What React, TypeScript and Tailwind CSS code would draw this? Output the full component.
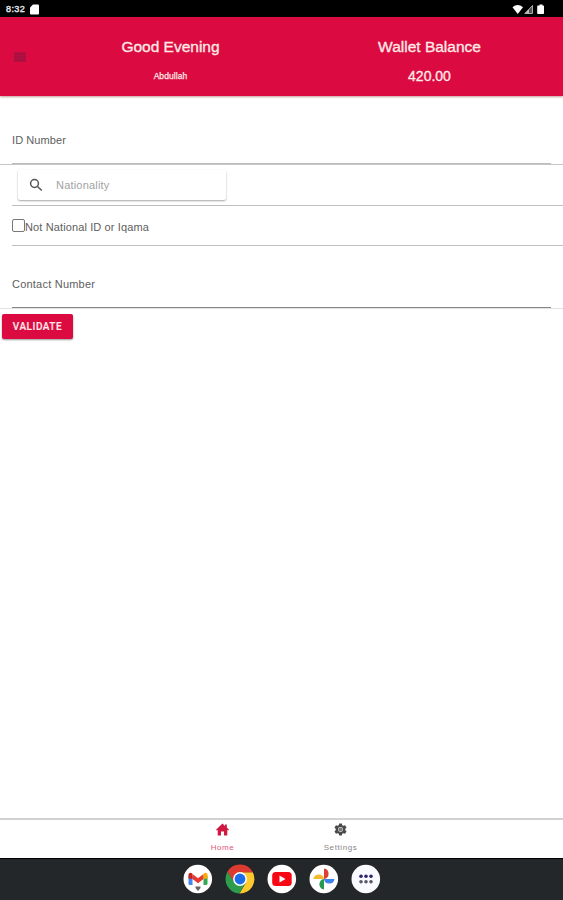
import React from 'react';

function StatusBar() {
  return (
    <div className="flex h-[17px] items-center justify-between bg-black pt-[2px] pr-[18px] pl-[6px] text-white">
      <div className="flex items-center gap-[5px]">
        <span className="w-[19px] text-[9px] leading-none tracking-[0.400px] text-gray-200 [-webkit-text-stroke:0.4px]">8:32</span>
        <svg className="h-[11px] w-[9px]" viewBox="0 0 9 11" fill="#fff">
          <path d="M3 .5h5a1 1 0 0 1 1 1V9.500a1 1 0 0 1-1 1H1a1 1 0 0 1-1-1V3.500z" />
        </svg>
      </div>
      <svg className="h-[11px] w-[33px]" viewBox="0 0 33 11">
        <path d="M.5 3.200Q5.500-1 11 3.200L5.750 10z" fill="#fff" />
        <path d="M12.800 9.500L20.500 1.500v8z" fill="#555" stroke="#aaa" strokeWidth="1" />
        <path d="M13 9.500l4-4.200v4.200z" fill="#bbb" />
        <path d="M26 1.500h1.500v-1h3v1h.7q.8 0 .8.8v7q0 .8-.8.8h-5.200q-.8 0-.8-.8v-7q0-.8.8-.8z" fill="#fff" />
      </svg>
    </div>
  );
}

function Header() {
  return (
    <header className="flex h-[79px] bg-[#db0a40] text-[#ffe9e6] shadow-[0_1px_2px_rgba(120,40,30,0.45)]">
      <div className="w-[41px] pt-[35px] pl-[14px]">
        <div className="flex h-[10px] w-[12px] flex-col justify-between bg-[#b90e40] py-[1px]">
          <i className="h-[2px] bg-[#a90f40]" />
          <i className="h-[2px] bg-[#a90f40]" />
          <i className="h-[2px] bg-[#a90f40]" />
        </div>
      </div>
      <div className="flex w-[259px] flex-col items-center pt-[20px]">
        <span className="text-[15.500px] leading-[20px] [-webkit-text-stroke:0.35px]">Good Evening</span>
        <span className="mt-[13px] text-[8.500px] leading-[12px] tracking-[0.080px] [-webkit-text-stroke:0.25px]">Abdullah</span>
      </div>
      <div className="flex w-[259px] flex-col items-center pt-[20px]">
        <span className="text-[15.500px] leading-[20px] [-webkit-text-stroke:0.35px]">Wallet Balance</span>
        <span className="mt-[10px] text-[14px] leading-[18px] [-webkit-text-stroke:0.35px]">420.00</span>
      </div>
    </header>
  );
}

function Form() {
  return (
    <main className="flex-1 text-[11px] text-[#606060]">
      <div className="h-[69px] border-b border-[#c6c6c6] pr-[12px] pl-[12px]">
        <div className="h-[68px] border-b border-[#bcbcbc] pt-[36px]">
          <label className="block leading-[16px] tracking-[0.080px]">ID Number</label>
        </div>
      </div>
      <div className="ml-[12px] h-[41px] border-b border-[#bfbfbf] pt-[5px] pl-[6px]">
        <div className="flex h-[30px] w-[208px] items-center rounded-[2px] bg-white pl-[11px] shadow-[0_1px_2px_rgba(0,0,0,0.35)]">
          <svg className="h-[14px] w-[14px]" viewBox="0 0 14 14" fill="none" stroke="#555" strokeWidth="1.500">
            <circle cx="5.500" cy="5.500" r="3.900" />
            <path d="M8.500 8.500L12.800 12.500" />
          </svg>
          <span className="ml-[13px] pt-[1px] tracking-[0.200px] text-[#a3a3a3]">Nationality</span>
        </div>
      </div>
      <div className="ml-[12px] flex h-[40px] items-center border-b border-[#bfbfbf]">
        <span className="h-[13px] w-[13px] rounded-[2px] border border-[#777] bg-white" />
        <span className="pt-[3px] tracking-[0.120px]">Not National ID or Iqama</span>
      </div>
      <div className="h-[63px] border-b border-[#e2e2e2] pr-[12px] pl-[12px]">
        <div className="h-[62px] border-b border-[#888] pt-[30px]">
          <label className="block leading-[16px] tracking-[0.220px]">Contact Number</label>
        </div>
      </div>
      <button className="mt-[5px] ml-[2px] block h-[25px] w-[71px] rounded-[2px] bg-[#db0a40] pt-[1px] font-['Roboto','Liberation_Sans',sans-serif] text-[10px] leading-none font-medium tracking-[0.520px] text-[#ffe5e8] shadow-[0_1px_2px_rgba(0,0,0,0.4)] [-webkit-text-stroke:0.2px]">
        VALIDATE
      </button>
    </main>
  );
}

function TabBar() {
  return (
    <nav className="flex h-[40px] justify-center border-t-2 border-[#d2d2d2] text-[8px] leading-[10px]">
      <div className="flex w-[118px] flex-col items-center pt-[3px] text-[#e3557a]">
        <svg className="h-[13px] w-[13px]" viewBox="0 0 13 13" fill="#cf1842">
          <path d="M6.500.500L9 2.900V1.500h1.800v3.100L13 6.700l-.8.900-.900-.8v5.700H8V8.500H5v4H1.700V6.800l-.9.800L0 6.700z" />
        </svg>
        <span className="mt-[7px] tracking-[0.600px]">Home</span>
      </div>
      <div className="flex w-[118px] flex-col items-center pt-[3px] text-[#888]">
        <svg className="h-[13px] w-[13px]" viewBox="0 0 24 24">
          <path fill="#4b4b4b" fillRule="evenodd" d="M9.500 1h5l.7 3.300 2 .9L20.300 4l2.900 4.500-2.300 2.200v2.600l2.300 2.200-2.900 4.500-3.100-1.200-2 .9-.7 3.300h-5l-.7-3.300-2-.9L3.700 20 .8 15.500l2.300-2.200v-2.600L.8 8.500 3.700 4l3.100 1.200 2-.9zM12 7.500a4.500 4.500 0 1 0 0 9 4.500 4.500 0 0 0 0-9z" />
          <circle cx="12" cy="12" r="3.600" fill="#777" />
        </svg>
        <span className="mt-[7px] tracking-[0.600px]">Settings</span>
      </div>
    </nav>
  );
}

function Dock() {
  const icon = 'h-[30px] w-[30px]';
  return (
    <footer className="flex h-[42px] items-center justify-center gap-[12px] border-t border-black bg-[#242729] pb-[2px]">
      <svg className={icon} viewBox="0 0 30 30">
        <circle cx="14.800" cy="15" r="14.300" fill="#fff" />
        <path d="M5.500 12h4v9H7q-1.500 0-1.500-1.500z" fill="#4285f4" />
        <path d="M20.500 12h4v7.500q0 1.500-1.500 1.500h-2.500z" fill="#34a853" />
        <path d="M9.500 10l5.500 4.300 5.500-4.300v5L15 19.300 9.500 15z" fill="#e83a2e" />
        <path d="M5.500 14.500V10.500Q6.500 7.500 9.500 9.800V15z" fill="#c5221f" />
        <path d="M24.500 14.500V10.500Q23.500 7.500 20.500 9.800V15z" fill="#fba704" />
        <path d="M12.500 22.500h5v1.500L15 27l-2.500-3z" fill="#666" />
      </svg>
      <svg className={icon} viewBox="0 0 30 30">
        <path d="M15 8.300H27.800A14.500 14.500 0 0 1 14.500 29.500L21 18.500z" fill="#fcca2f" />
        <path d="M2.440 7.750A14.500 14.500 0 0 1 27.800 8.300H15L9 18.500z" fill="#dd3b2f" />
        <path d="M2.440 7.750L9.200 18.350 15 21.700 20.800 18.350 14.500 29.500A14.500 14.500 0 0 1 2.440 7.750z" fill="#2d9c4c" />
        <circle cx="15" cy="15" r="6.900" fill="#fff" />
        <circle cx="15" cy="15" r="5.400" fill="#1a6ce8" />
      </svg>
      <svg className={icon} viewBox="0 0 30 30">
        <circle cx="14.800" cy="15" r="14.300" fill="#fff" />
        <rect x="5.200" y="8" width="19.500" height="14" rx="3.500" fill="#f80814" />
        <path d="M12.500 11.500v7l6-3.500z" fill="#fff" />
      </svg>
      <svg className={icon} viewBox="0 0 30 30">
        <circle cx="14.800" cy="15" r="14.300" fill="#fff" />
        <path d="M15 15V4.500a5.300 5.300 0 0 1 0 10.500z" fill="#df3e32" />
        <path d="M15 15h10.500a5.300 5.300 0 0 1-10.500 0z" fill="#3b82ed" />
        <path d="M15 15v10.500a5.300 5.300 0 0 1 0-10.500z" fill="#249b4d" />
        <path d="M15 15H4.500a5.300 5.300 0 0 1 10.500 0z" fill="#f6b82d" />
      </svg>
      <svg className={icon} viewBox="0 0 30 30">
        <circle cx="14.800" cy="15" r="14.300" fill="#f9faff" />
        <g fill="#30236f">
          <circle cx="10" cy="12.300" r="1.800" />
          <circle cx="15" cy="12.300" r="1.800" />
          <circle cx="20" cy="12.300" r="1.800" />
        </g>
        <g fill="#5b5668">
          <circle cx="10" cy="17.800" r="1.800" />
          <circle cx="15" cy="17.800" r="1.800" />
          <circle cx="20" cy="17.800" r="1.800" />
        </g>
      </svg>
    </footer>
  );
}

export default function App() {
  return (
    <div className="flex h-[900px] w-[563px] flex-col overflow-hidden bg-white font-['Liberation_Sans',Arial,sans-serif]">
      <StatusBar />
      <Header />
      <Form />
      <TabBar />
      <Dock />
    </div>
  );
}
